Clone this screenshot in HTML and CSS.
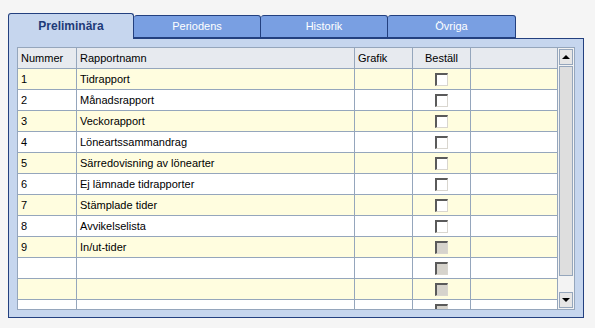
FILE: index.html
```html
<!DOCTYPE html>
<html lang="sv">
<head>
<meta charset="UTF-8" />
<title>Rapporter</title>
<link rel="stylesheet" href="styles.css">
</head>
<body>
  <div class="tabview">
    <!-- Tab strip -->
    <div class="tabs">
      <div class="tab active">Preliminära</div>
      <div class="tab">Periodens</div>
      <div class="tab">Historik</div>
      <div class="tab last">Övriga</div>
    </div>

    <!-- Panel with report grid -->
    <div class="panel">
      <div class="grid">
        <div class="grid-body">
          <table>
            <colgroup>
              <col class="c-num"><col class="c-name"><col class="c-graf"><col class="c-order"><col class="c-rest">
            </colgroup>
            <thead>
              <tr><th>Nummer</th><th>Rapportnamn</th><th>Grafik</th><th class="center">Beställ</th><th></th></tr>
            </thead>
            <tbody>
              <tr><td>1</td><td>Tidrapport</td><td></td><td class="center"><span class="cb"></span></td><td></td></tr>
              <tr><td>2</td><td>Månadsrapport</td><td></td><td class="center"><span class="cb"></span></td><td></td></tr>
              <tr><td>3</td><td>Veckorapport</td><td></td><td class="center"><span class="cb"></span></td><td></td></tr>
              <tr><td>4</td><td>Löneartssammandrag</td><td></td><td class="center"><span class="cb"></span></td><td></td></tr>
              <tr><td>5</td><td>Särredovisning av lönearter</td><td></td><td class="center"><span class="cb"></span></td><td></td></tr>
              <tr><td>6</td><td>Ej lämnade tidrapporter</td><td></td><td class="center"><span class="cb"></span></td><td></td></tr>
              <tr><td>7</td><td>Stämplade tider</td><td></td><td class="center"><span class="cb"></span></td><td></td></tr>
              <tr><td>8</td><td>Avvikelselista</td><td></td><td class="center"><span class="cb"></span></td><td></td></tr>
              <tr><td>9</td><td>In/ut-tider</td><td></td><td class="center"><span class="cb off"></span></td><td></td></tr>
              <tr><td></td><td></td><td></td><td class="center"><span class="cb off"></span></td><td></td></tr>
              <tr><td></td><td></td><td></td><td class="center"><span class="cb off"></span></td><td></td></tr>
              <tr><td></td><td></td><td></td><td class="center"><span class="cb off"></span></td><td></td></tr>
            </tbody>
          </table>
        </div>

        <!-- Vertical scrollbar -->
        <div class="scrollbar">
          <div class="sb-btn"><span class="arrow up"></span></div>
          <div class="sb-track"><div class="sb-thumb"></div></div>
          <div class="sb-btn"><span class="arrow down"></span></div>
        </div>
      </div>
    </div>
  </div>
</body>
</html>
```

FILE: styles.css
```css
/* Tabbed report list, old desktop look */

body {
  margin: 0;
  background-color: #f5f5f5;
  font-family: "Liberation Sans", Arial, sans-serif;
  font-size: 11px;
  color: #000;
}

.tabview {
  padding: 13px 0 0 8px;
  width: 576px;
}

/* Tab strip */
.tabs {
  display: flex;
  align-items: flex-end;
  height: 25px;
}

.tab {
  box-sizing: border-box;
  width: 127px;
  height: 23px;
  line-height: 21px;
  text-align: center;
  background-color: #799fe2;
  color: #fff;
  border: 1px solid #23407f;
  border-left: none;
  border-radius: 3px 3px 0 0;
}

.tab.active {
  width: 126px;
  height: 26px;
  margin-bottom: -1px;
  line-height: 25px;
  background-color: #c6d6ee;
  color: #1e3a78;
  font-size: 12px;
  font-weight: bold;
  border-left: 1px solid #23407f;
  border-bottom: none;
  position: relative;
  z-index: 1;
}

.tab.last {
  width: 128px;
}

/* Panel under tabs */
.panel {
  box-sizing: border-box;
  height: 280px;
  background-color: #c6d6ee;
  border: 1px solid #23407f;
  padding: 8px 8px 8px 8px;
}

/* Grid box */
.grid {
  display: flex;
  height: 262px;
  background-color: #fff;
  border: 1px solid #95a6bc;
  border-top: none;
  border-left: none;
  overflow: hidden;
}

.grid-body {
  flex: 1;
  overflow: hidden;
}

table {
  border-collapse: collapse;
  table-layout: fixed;
  width: 541px;
}

col.c-num { width: 59px; }
col.c-name { width: 278px; }
col.c-graf { width: 58px; }
col.c-order { width: 58px; }
col.c-rest { width: 88px; }

th, td {
  border: 1px solid #95a6bc;
  height: 20px;
  padding: 0 0 0 3px;
  text-align: left;
  font-weight: normal;
  white-space: nowrap;
  vertical-align: middle;
}

th {
  background-color: #e7eaef;
}

tbody tr:nth-child(odd) td {
  background-color: #fffddf;
}

.center {
  text-align: center;
  padding: 0;
}

/* Sunken checkbox */
.cb {
  display: inline-block;
  box-sizing: border-box;
  width: 13px;
  height: 13px;
  vertical-align: middle;
  background-color: #fff;
  border-top: 2px solid #5a5a5a;
  border-left: 2px solid #5a5a5a;
  border-right: 1px solid #d9d6cf;
  border-bottom: 1px solid #d9d6cf;
}

.cb.off {
  background-color: #d6d3cc;
}

/* Scrollbar */
.scrollbar {
  display: flex;
  flex-direction: column;
  box-sizing: border-box;
  width: 17px;
  background-color: #f3f3f3;
  border-top: 1px solid #95a6bc;
  border-left: 1px solid #95a6bc;
}

.sb-btn {
  box-sizing: border-box;
  height: 16px;
  margin: 1px 1px 0 1px;
  background-color: #e6e6e6;
  border: 1px solid #95a6bc;
  display: flex;
  align-items: center;
  justify-content: center;
}

.sb-btn:last-child {
  margin-bottom: 1px;
}

.sb-track {
  flex: 1;
  padding: 1px 1px 15px 1px;
  display: flex;
}

.sb-thumb {
  flex: 1;
  background-color: #dedede;
  border: 1px solid #95a6bc;
}

.arrow {
  width: 0;
  height: 0;
  border-left: 4px solid transparent;
  border-right: 4px solid transparent;
}

.arrow.up {
  border-bottom: 4px solid #000;
}

.arrow.down {
  border-top: 4px solid #000;
}
```
